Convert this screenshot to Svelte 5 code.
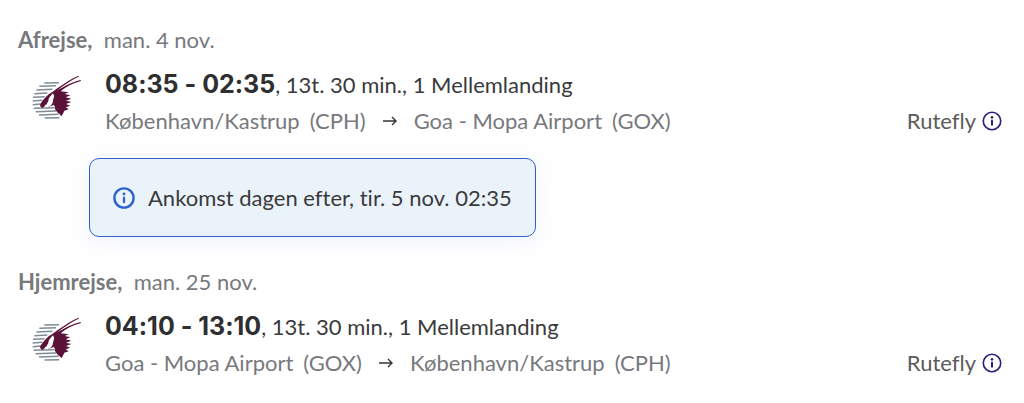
<script>
  const flights = [
    {
      label: "Afrejse,",
      date: "man. 4 nov.",
      time: "08:35 - 02:35",
      duration: "13t. 30 min.",
      stops: "1 Mellemlanding",
      from: { name: "København/Kastrup", code: "CPH" },
      to: { name: "Goa - Mopa Airport", code: "GOX" },
      notice: "Ankomst dagen efter, tir. 5 nov. 02:35",
    },
    {
      label: "Hjemrejse,",
      date: "man. 25 nov.",
      time: "04:10 - 13:10",
      duration: "13t. 30 min.",
      stops: "1 Mellemlanding",
      from: { name: "Goa - Mopa Airport", code: "GOX" },
      to: { name: "København/Kastrup", code: "CPH" },
    },
  ];
</script>

{#snippet info(width)}
  <svg class="info" viewBox="0 0 22 22" aria-hidden="true">
    <circle cx="11" cy="11" r="9.6" fill="none" stroke="currentColor" stroke-width={width} />
    <circle cx="11" cy="7" r="1.4" fill="currentColor" />
    <path d="M11 10.5v4.7" stroke="currentColor" stroke-width="2.2" stroke-linecap="round" />
  </svg>
{/snippet}

{#snippet airline()}
  <svg class="logo" viewBox="36 28 150 132" role="img" aria-label="Qatar Airways">
    <g fill="none" stroke="#7f8b96" stroke-width="4.4">
      <path d="M73 52L117 51M58 62L108 60M49 73L97 71M43 84L82 82M39 95L74 93M38 106L67 104" />
      <path d="M38 117L62 115M41 128L104 126M47 138L108 136M57 148L116 146M74 157L118 156" />
    </g>
    <path
      fill="#5a1238"
      d="M98 78C112 68 148 41 176 30Q178 31 176 33C150 45 127 62 111 75C132 62 159 48 182 43Q184 45 181 47C158 53 138 63 122 77L146 80L134 85L151 89L137 95L154 99L138 105L154 109L138 115L151 120L137 125L146 131L133 135L130 142L124 152C119 142 103 138 105 124L101 117C93 123 81 126 79 114C75 119 72 127 66 126Q58 122 61 115C69 102 81 87 98 78Z"
    />
    <path fill="#fff" d="M99 83C91 91 84 99 85 107Q79 112 80 121Q85 125 92 120C100 114 98 105 101 97Q104 90 99 83Z" />
  </svg>
{/snippet}

<main>
  {#each flights as flight}
    <section>
      <h2>{flight.label} <span>{flight.date}</span></h2>
      <div class="flight">
        {@render airline()}
        <div class="details">
          <p class="times"><strong>{flight.time}</strong>, {flight.duration}, {flight.stops}</p>
          <div class="row">
            <p class="route">
              <span>{flight.from.name}</span>
              <span>({flight.from.code})</span>
              <svg class="arrow" viewBox="0 0 16 12" aria-label="til" role="img">
                <path d="M1 6h13M10 2l4 4-4 4" fill="none" stroke="#333" stroke-width="1.4" />
              </svg>
              <span>{flight.to.name}</span>
              <span>({flight.to.code})</span>
            </p>
            <button type="button">Rutefly {@render info(1.8)}</button>
          </div>
        </div>
      </div>
      {#if flight.notice}
        <div class="notice">
          {@render info(2.4)}
          <span>{flight.notice}</span>
        </div>
      {/if}
    </section>
  {/each}
</main>

<style>
  :global(body) {
    margin: 0;
    background: #fff;
  }

  main {
    padding: 24px 22px 22px 18px;
    font-family: Lato, "Liberation Sans", sans-serif;
    font-size: 22px;
    font-variant-ligatures: none;
    color: #3a3a3c;
  }

  section + section {
    margin-top: 29px;
  }

  h2,
  p {
    margin: 0;
  }

  h2 {
    font-size: 22px;
    line-height: 32px;
    font-weight: 700;
    color: #77797d;
  }

  h2 span {
    margin-left: 6px;
    font-weight: 400;
  }

  .flight {
    display: flex;
    gap: 23px;
    padding: 11px 0 0 14px;
  }

  .logo {
    flex: none;
    width: 50px;
    height: 44px;
    margin-top: 8px;
  }

  .details {
    flex: 1;
    line-height: 36px;
  }

  .times strong {
    font-family: Inter, "Liberation Sans", sans-serif;
    font-size: 25px;
    font-weight: 700;
    line-height: 24px;
    color: #2f2f31;
  }

  .row {
    display: flex;
    justify-content: space-between;
  }

  .route {
    display: flex;
    align-items: center;
    gap: 10px;
    color: #77797d;
  }

  .arrow {
    width: 16px;
    height: 12px;
    margin: 0 6px;
  }

  button {
    display: flex;
    align-items: center;
    gap: 6px;
    padding: 0;
    border: 0;
    background: none;
    font: inherit;
    color: #5c5c5c;
    cursor: pointer;
  }

  .info {
    flex: none;
    width: 22px;
    height: 22px;
  }

  button .info {
    width: 20px;
    height: 20px;
    color: #2a1f78;
  }

  .notice {
    display: flex;
    align-items: center;
    gap: 13px;
    width: fit-content;
    margin: 19px 0 0 71px;
    padding: 22px 23px 21px;
    border: 1px solid #2f5fc9;
    border-radius: 10px;
    background: #ebf3fa;
    box-shadow: 0 4px 24px rgba(60, 90, 200, 0.08);
    line-height: 34px;
  }

  .notice .info {
    color: #2f62d0;
  }
</style>
